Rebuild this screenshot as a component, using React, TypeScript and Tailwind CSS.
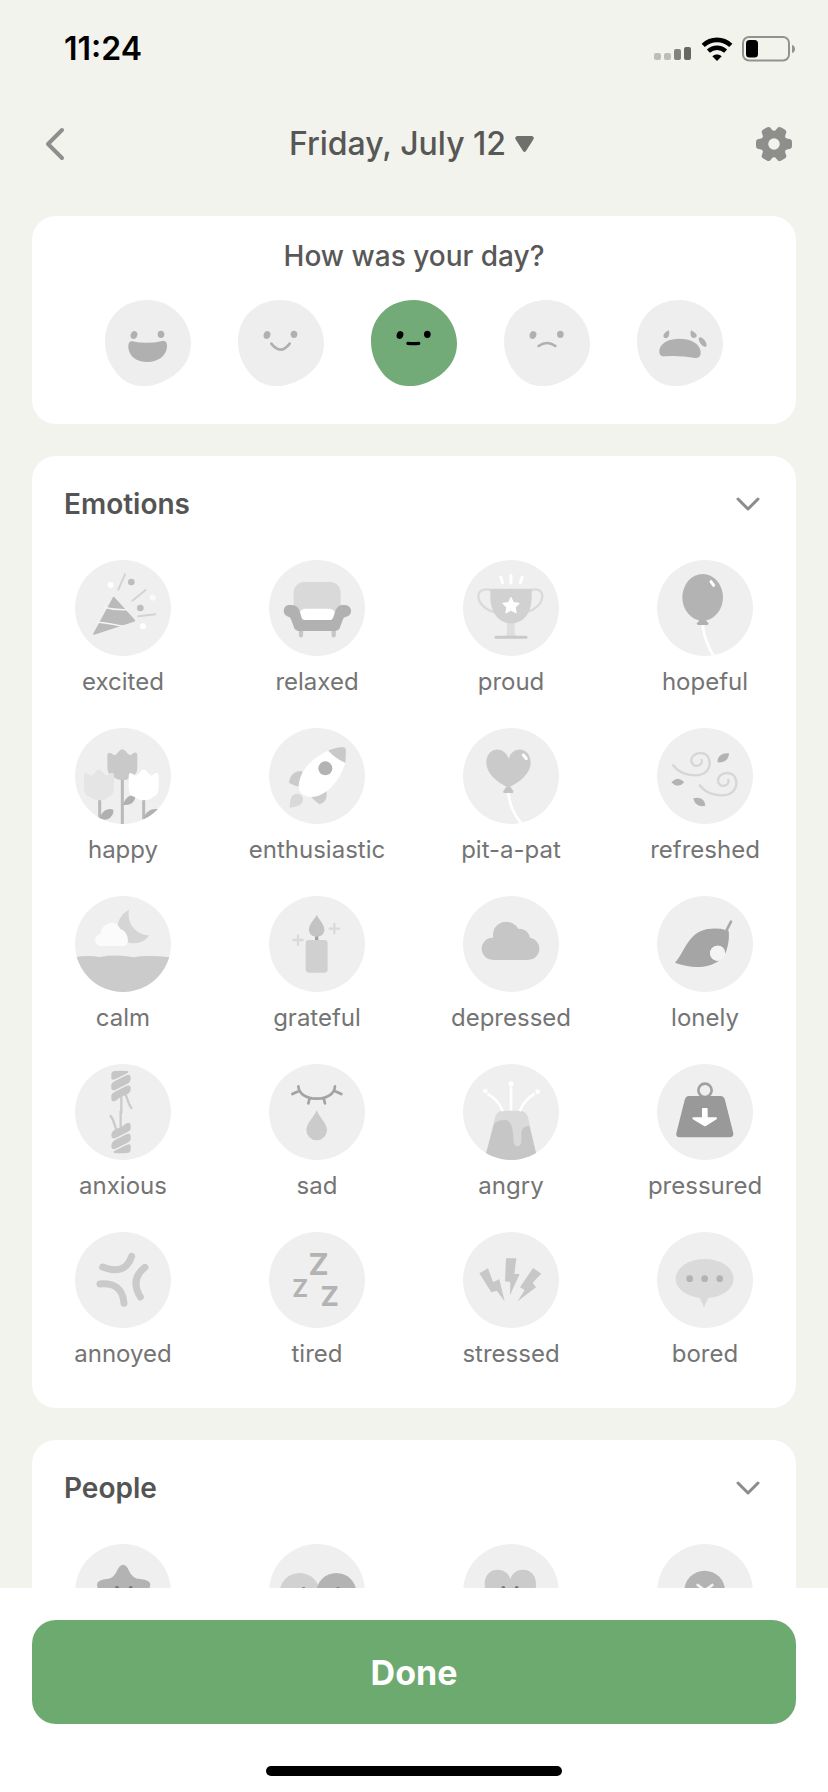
import React, { useState } from 'react';

const BG = '#efefef';

interface IconItem {
  name: string;
  icon: React.ReactNode;
}

const SignalIcon = () => (
  <svg width="38" height="14" viewBox="0 0 38 14" aria-hidden="true">
    <rect x="0" y="7" width="7" height="7" rx="2" fill="#bdbeb9" />
    <rect x="10" y="7" width="7" height="7" rx="2" fill="#bdbeb9" />
    <rect x="20" y="3" width="7" height="11" rx="2" fill="#82837f" />
    <rect x="30" y="1" width="7" height="13" rx="2" fill="#666762" />
  </svg>
);

const WifiIcon = () => (
  <svg width="32" height="24" viewBox="0 0 32 24" aria-hidden="true">
    <path d="M2.2 8.4C10 1 22 1 29.8 8.4" fill="none" stroke="#000" strokeWidth="4.6" />
    <path d="M7.4 14.2C12.4 9.6 19.6 9.6 24.6 14.2" fill="none" stroke="#000" strokeWidth="4.4" />
    <path d="M16 24L11.3 19.2C14 16.8 18 16.8 20.7 19.2Z" fill="#000" />
  </svg>
);

const BatteryIcon = () => (
  <svg width="54" height="26" viewBox="0 0 54 26" aria-hidden="true">
    <rect x="1" y="1" width="46" height="23.500" rx="6" fill="none" stroke="#92938f" strokeWidth="2" />
    <rect x="4" y="4" width="12" height="17.500" rx="3.500" fill="#000" />
    <path d="M50 9C54 10 54 16 50 17Z" fill="#92938f" />
  </svg>
);

const GearIcon = () => (
  <svg width="36" height="36" viewBox="-18 -18 36 36" aria-hidden="true">
    <circle r="9.500" fill="none" stroke="#8e8e8c" strokeWidth="7.500" />
    {[0, 60, 120, 180, 240, 300].map((angle) => (
      <path
        key={angle}
        d="M10 -6.500L13 -5.500L16.500 -4.800Q18 -4 18 -2V2Q18 4 16.500 4.800L13 5.500L10 6.500Z"
        fill="#8e8e8c"
        transform={`rotate(${angle})`}
      />
    ))}
  </svg>
);

const ChevronDown = () => (
  <svg width="24" height="14" viewBox="0 0 24 14" fill="none" stroke="#8c8c8c" strokeWidth="3" strokeLinecap="round" strokeLinejoin="round" aria-hidden="true">
    <path d="M2 2L12 12L22 2" />
  </svg>
);

const moods = [
  {
    name: 'great',
    face: (
      <>
        <ellipse cx="87" cy="105" rx="10" ry="12" transform="rotate(18 87 105)" fill="currentColor" />
        <ellipse cx="168" cy="103" rx="10" ry="11" fill="currentColor" />
        <path d="M82 124Q128 134 175 122Q187 122 186 140C184 170 155 186 128 186C95 186 70 168 70 140Q70 122 82 124Z" fill="currentColor" />
      </>
    ),
  },
  {
    name: 'good',
    face: (
      <>
        <ellipse cx="87" cy="105" rx="10" ry="12" transform="rotate(18 87 105)" fill="currentColor" />
        <ellipse cx="168" cy="103" rx="10" ry="11" fill="currentColor" />
        <path d="M100 131Q128 167 155 131" fill="none" stroke="currentColor" strokeWidth="8" strokeLinecap="round" />
      </>
    ),
  },
  {
    name: 'okay',
    face: (
      <>
        <ellipse cx="87" cy="105" rx="10" ry="12" transform="rotate(18 87 105)" fill="currentColor" />
        <ellipse cx="169" cy="103" rx="10" ry="11" fill="currentColor" />
        <path d="M111 130Q127 132 143 130" fill="none" stroke="currentColor" strokeWidth="10" strokeLinecap="round" />
      </>
    ),
  },
  {
    name: 'bad',
    face: (
      <>
        <ellipse cx="87" cy="105" rx="10" ry="12" transform="rotate(18 87 105)" fill="currentColor" />
        <ellipse cx="169" cy="103" rx="10" ry="11" fill="currentColor" />
        <path d="M104 138Q129 120 154 138" fill="none" stroke="currentColor" strokeWidth="8" strokeLinecap="round" />
      </>
    ),
  },
  {
    name: 'awful',
    face: (
      <>
        <path d="M96 91C98 104 96 115 86 115C77 114 74 101 96 91Z" fill="currentColor" />
        <path d="M162 91C182 100 184 113 171 114C160 113 159 103 162 91Z" fill="currentColor" />
        <ellipse cx="197" cy="126" rx="8" ry="17" transform="rotate(-36 197 126)" fill="currentColor" />
        <path d="M84 169Q65 171 67 150C74 104 186 104 191 155Q192 175 174 174Q128 166 84 169Z" fill="currentColor" />
      </>
    ),
  },
];

const Tulip = ({ x = 0, y = 0, fill }: { x?: number; y?: number; fill: string }) => (
  <path
    transform={`translate(${x} ${y})`}
    d="M97 82Q98 70 108 76L118 82Q127 78 132 70Q142 57 152 70Q157 78 166 82L176 75Q187 70 187 82V118Q187 140 170 146Q160 156 142 156Q126 156 116 147Q97 140 97 118Z"
    fill={fill}
  />
);

const RopeEnd = () => (
  <>
    <g fill="none" stroke="#cbcbcb" strokeWidth="7" strokeLinecap="round">
      <path d="M139 95V146" />
      <path d="M152 92C160 110 158 118 169 132" />
    </g>
    <g fill="#c6c6c6">
      <path d="M109 30Q110 22 120 21Q140 19 158 21Q163 23 158 27L122 45Q109 50 109 42Z" />
      <path d="M109 62Q110 56 120 51L154 34Q167 29 167 42Q167 54 156 60L122 77Q109 82 109 72Z" />
      <path d="M109 94Q110 88 120 83L154 66Q167 61 167 74Q168 86 152 93L138 98L122 110Q109 116 109 104Z" />
    </g>
  </>
);

const emotions: IconItem[] = [
  {
    name: 'excited',
    icon: (
      <>
        <path d="M116 113L178 182L57 222Z" fill="#bababa" stroke="#bababa" strokeWidth="5" strokeLinejoin="round" />
        <path d="M84 141Q118 151 158 149M66 186Q104 190 146 199" fill="none" stroke="#f5f5f5" strokeWidth="4" />
        <path d="M150 43L130 89M212 90L172 122M241 163L190 169" fill="none" stroke="#d3d3d3" strokeWidth="6" strokeLinecap="round" />
        <circle cx="169" cy="66" r="10" fill="#bdbdbd" />
        <circle cx="196" cy="144" r="10" fill="#bdbdbd" />
        <circle cx="107" cy="75" r="9" fill="#fff" />
        <circle cx="233" cy="113" r="9" fill="#fafafa" />
        <circle cx="204" cy="199" r="9" fill="#fff" />
      </>
    ),
  },
  {
    name: 'relaxed',
    icon: (
      <>
        <path d="M96 210V226M194 210V226" stroke="#c6c6c6" strokeWidth="13" strokeLinecap="round" />
        <rect x="74" y="66" width="141" height="110" rx="32" fill="#d9d9d9" />
        <rect x="92" y="146" width="106" height="40" rx="16" fill="#fff" />
        <path d="M58 135H68C84 135 91 146 94 160L98 174Q100 180 107 180H183Q190 180 192 174L197 160C200 146 208 135 220 135H228A18 18 0 0 1 229 171Q224 172 222 178L212 205Q208 213 200 213H88Q80 213 76 205L66 178Q64 171 58 170A18 18 0 0 1 58 135Z" fill="#b1b1b1" />
      </>
    ),
  },
  {
    name: 'proud',
    icon: (
      <>
        <path d="M113 51L119 68M144 46V69M178 51L172 68" stroke="#fff" strokeWidth="9" strokeLinecap="round" />
        <path d="M84 91C66 84 46 90 46 110C48 134 72 152 98 158M204 91C220 84 238 90 238 110C236 134 212 152 188 158" fill="none" stroke="#dadada" strokeWidth="7" />
        <path d="M132 186H155V222Q158 229 166 230H120Q130 229 132 222Z" fill="#dedede" />
        <path d="M82 86H206V116C204 150 190 188 144 190C100 188 84 150 82 116Z" fill="#d1d1d1" />
        <path d="M99 232H189" stroke="#cacaca" strokeWidth="9" strokeLinecap="round" />
        <path d="M144 113L151 128L168 130L156 142L159 158L144 150L129 158L132 142L120 130L137 128Z" fill="#fff" stroke="#fff" strokeWidth="4" strokeLinejoin="round" />
      </>
    ),
  },
  {
    name: 'hopeful',
    icon: (
      <>
        <path d="M137 194C140 230 154 262 171 290" fill="none" stroke="#fff" strokeWidth="8" />
        <path d="M137 168L154 190Q155 195 150 195H124Q119 195 120 190Z" fill="#b0b0b0" />
        <ellipse cx="137" cy="112" rx="61" ry="70" fill="#b3b3b3" />
        <path d="M162 65L170 76" stroke="#fff" strokeWidth="9" strokeLinecap="round" />
      </>
    ),
  },
  {
    name: 'happy',
    icon: (
      <>
        <path d="M142 150V290M74 205V274M206 205V274" stroke="#b9b9b9" strokeWidth="9" />
        <path d="M145 230C150 210 162 200 180 203C184 220 165 234 145 230ZM74 274C78 250 98 238 115 245C118 262 100 280 80 274ZM206 272C212 250 230 240 250 244C240 262 220 270 206 272Z" fill="#b0b0b0" />
        <Tulip fill="#c9c9c9" />
        <Tulip x={-70} y={61} fill="#e5e5e5" />
        <Tulip x={64} y={61} fill="#fff" />
      </>
    ),
  },
  {
    name: 'enthusiastic',
    icon: (
      <>
        <path d="M60 164Q64 130 98 129L110 150L88 176Q74 172 60 164Z" fill="#cbcbcb" />
        <path d="M126 206L172 188Q178 220 152 229Q138 220 126 206Z" fill="#cbcbcb" />
        <path d="M62 239C62 208 70 196 88 197C106 204 106 222 92 232Q80 238 62 239Z" fill="#d9d9d9" />
        <path d="M178 68C128 88 88 134 89 178Q92 206 126 207C174 206 216 152 229 104Z" fill="#fff" />
        <path d="M178 68Q204 55 224 58Q230 59 231 66L229 104Q200 92 178 68Z" fill="#c9c9c9" />
        <circle cx="169" cy="121" r="21" fill="#b3b3b3" />
      </>
    ),
  },
  {
    name: 'pit-a-pat',
    icon: (
      <>
        <path d="M136 192C138 232 154 262 178 290" fill="none" stroke="#fff" strokeWidth="8" />
        <path d="M136 168L151 189Q152 195 148 195H124Q119 195 121 189Z" fill="#c4c4c4" />
        <path d="M137 92C122 50 70 58 70 104C70 138 104 162 128 175Q136 180 144 175C168 162 203 138 203 104C203 58 150 50 137 92Z" fill="#cacaca" />
        <path d="M181 81L190 92" stroke="#fff" strokeWidth="9" strokeLinecap="round" />
      </>
    ),
  },
  {
    name: 'refreshed',
    icon: (
      <>
        <g fill="none" stroke="#d6d6d6" strokeWidth="7" strokeLinecap="round">
          <path d="M48 112C66 135 90 142 114 142C142 142 158 126 158 106C158 86 146 75 130 75C114 75 102 86 103 98C104 110 114 115 122 113C132 112 136 104 134 96" />
          <path d="M128 172C146 195 170 202 194 202C222 202 238 186 238 166C238 146 226 135 210 135C194 135 182 146 183 158C184 170 194 175 202 173C212 172 216 164 214 156" />
        </g>
        <path d="M182 103C180 85 195 74 216 76C216 95 200 106 182 103ZM43 163Q62 142 82 163Q62 184 43 163ZM109 211C128 205 144 214 145 233C128 238 112 230 109 211Z" fill="#b3b3b3" />
      </>
    ),
  },
  {
    name: 'calm',
    icon: (
      <>
        <path d="M162 42C130 56 118 100 136 124C152 148 202 150 223 118C186 118 154 84 162 42Z" fill="#d5d5d5" />
        <path d="M80 150C56 150 54 120 76 113C84 74 126 72 136 99C160 104 168 150 146 150Z" fill="#fbfbfb" />
        <path d="M0 184Q36 176 74 183Q110 176 150 180L176 184Q210 176 288 184V288H0Z" fill="#cbcbcb" />
      </>
    ),
  },
  {
    name: 'grateful',
    icon: (
      <>
        <rect x="110" y="132" width="66" height="98" rx="10" fill="#d0d0d0" />
        <path d="M143 116V132" stroke="#a3a3a3" strokeWidth="10" />
        <path d="M143 57C150 72 166 84 166 101C166 115 155 122 143 122C131 122 120 115 120 101C120 84 136 72 143 57Z" fill="#c3c3c3" />
        <path d="M87 118V146M73 132H101M196 84V112M182 98H210" stroke="#dadada" strokeWidth="7" strokeLinecap="round" />
      </>
    ),
  },
  {
    name: 'depressed',
    icon: (
      <g fill="#c6c6c6">
        <circle cx="89" cy="158" r="33" />
        <circle cx="196" cy="158" r="33" />
        <circle cx="130" cy="117" r="40" />
        <circle cx="169" cy="130" r="32" />
        <rect x="89" y="124" width="107" height="68" />
      </g>
    ),
  },
  {
    name: 'lonely',
    icon: (
      <>
        <path d="M54 200C84 168 94 100 164 98Q190 97 206 102L215 104C218 130 212 155 205 173A23 23 0 1 0 186 194C150 220 96 216 54 200Z" fill="#a5a5a5" />
        <circle cx="181" cy="172" r="22" fill="#f4f4f4" />
        <path d="M209 102L222 77" stroke="#a8a8a8" strokeWidth="8" strokeLinecap="round" />
      </>
    ),
  },
  {
    name: 'anxious',
    icon: (
      <>
        <RopeEnd />
        <g transform="rotate(180 138 144)">
          <RopeEnd />
        </g>
      </>
    ),
  },
  {
    name: 'sad',
    icon: (
      <>
        <path d="M88 67C90 90 112 104 143 104C174 104 196 90 198 67M70 90L90 81M217 90L197 81M122 102L118 118M164 102L168 118" fill="none" stroke="#a3a3a3" strokeWidth="8" strokeLinecap="round" />
        <path d="M143 139C151 160 174 178 174 198A31 31 0 0 1 112 198C112 178 135 160 143 139Z" fill="#cbcbcb" />
      </>
    ),
  },
  {
    name: 'angry',
    icon: (
      <>
        <path d="M118 140H172Q192 142 196 164L224 288H64L95 164Q100 142 118 140Z" fill="#dadada" />
        <path d="M94 178Q110 166 130 168Q146 172 150 206L152 234Q154 247 163 247Q174 247 175 232V204Q178 186 199 186L224 288H64Z" fill="#c6c6c6" />
        <path d="M118 138Q104 106 76 91M144 136V72M172 138Q186 106 212 91" fill="none" stroke="#fff" strokeWidth="8" strokeLinecap="round" />
        <circle cx="67" cy="81" r="7" fill="#fff" />
        <circle cx="144" cy="60" r="8" fill="#fff" />
        <circle cx="224" cy="83" r="7" fill="#fff" />
      </>
    ),
  },
  {
    name: 'pressured',
    icon: (
      <>
        <circle cx="144" cy="79" r="20" fill="none" stroke="#a0a0a0" strokeWidth="8" />
        <path d="M96 96H190Q201 96 204 108L229 208Q230 220 218 220H68Q56 220 58 208L83 108Q86 96 96 96Z" fill="#999" />
        <path d="M138 135H149V163H177L144 184L109 163H138Z" fill="#fff" stroke="#fff" strokeWidth="6" strokeLinejoin="round" />
      </>
    ),
  },
  {
    name: 'annoyed',
    icon: (
      <path d="M83 105Q150 132 170 73M210 106Q164 142 196 195M75 156Q142 150 147 214" fill="none" stroke="#cacaca" strokeWidth="21" strokeLinecap="round" />
    ),
  },
  {
    name: 'tired',
    icon: (
      <g fill="#b3b3b3" className="font-bold" textAnchor="middle">
        <text x="149" y="129" fontSize="91">Z</text>
        <text x="94" y="196" fontSize="72">Z</text>
        <text x="182" y="223" fontSize="83">Z</text>
      </g>
    ),
  },
  {
    name: 'stressed',
    icon: (
      <path d="M129 79H160L154 126H170L141 190L142 150L126 148ZM49 124L75 109L90 150L109 142L125 208L101 176L85 181ZM210 108L235 125L209 152L219 166L164 208L185 174L171 166Z" fill="#c7c7c7" />
    ),
  },
  {
    name: 'bored',
    icon: (
      <>
        <ellipse cx="143" cy="140" rx="87" ry="59" fill="#dadada" />
        <path d="M124 188H158L141 226Z" fill="#dadada" />
        <g fill="#b3b3b3">
          <circle cx="98" cy="140" r="10" />
          <circle cx="143" cy="140" r="10" />
          <circle cx="188" cy="140" r="10" />
        </g>
      </>
    ),
  },
];

const people: IconItem[] = [
  {
    name: 'friends',
    icon: (
      <>
        <path d="M144 62Q155 62 162 80Q172 104 196 105Q226 108 226 122Q226 134 206 152Q192 166 200 190Q204 222 180 212Q144 190 110 212Q84 222 90 190Q98 166 82 152Q66 134 66 122Q66 108 94 105Q116 104 126 80Q134 62 144 62Z" fill="#b3b3b3" />
        <circle cx="126" cy="132" r="6" fill="#777" />
        <circle cx="167" cy="132" r="6" fill="#777" />
      </>
    ),
  },
  {
    name: 'family',
    icon: (
      <>
        <circle cx="92" cy="147" r="60" fill="#d1d1d1" />
        <circle cx="202" cy="147" r="60" fill="#b3b3b3" />
        <circle cx="104" cy="134" r="5" fill="#777" />
        <circle cx="207" cy="134" r="5" fill="#777" />
      </>
    ),
  },
  {
    name: 'partner',
    icon: (
      <>
        <path d="M142 106C132 66 65 66 65 120C65 170 112 200 142 220C172 200 219 170 219 120C219 66 152 66 142 106Z" fill="#cbcbcb" />
        <circle cx="121" cy="132" r="6" fill="#777" />
        <circle cx="161" cy="132" r="6" fill="#777" />
      </>
    ),
  },
  {
    name: 'none',
    icon: (
      <>
        <circle cx="143" cy="141" r="61" fill="#b3b3b3" />
        <path d="M122 123L137 134L122 146M166 123L151 134L166 146" fill="none" stroke="#f4f4f4" strokeWidth="8" strokeLinecap="round" />
      </>
    ),
  },
];

const IconBadge = ({ children }: { children: React.ReactNode }) => (
  <span className="block size-24 overflow-hidden rounded-full">
    <svg viewBox="0 0 288 288" className="size-full" aria-hidden="true">
      <rect width="288" height="288" fill={BG} />
      {children}
    </svg>
  </span>
);

const Section = ({ title, items, showLabels = true }: { title: string; items: IconItem[]; showLabels?: boolean }) => (
  <section className="shrink-0 rounded-3xl bg-white pt-8 pb-[38px]">
    <button type="button" className="flex w-full items-center justify-between pr-9 pl-8">
      <h2 className="text-[28px] leading-8 font-semibold text-[#545454]">{title}</h2>
      <ChevronDown />
    </button>
    <div className="mt-10 grid grid-cols-4 gap-x-13 gap-y-[30px] px-5">
      {items.map((item) => (
        <button key={item.name} type="button" aria-label={item.name} className="flex flex-col items-center gap-[10px]">
          <IconBadge>{item.icon}</IconBadge>
          {showLabels && <span className="text-2xl text-[#747474]">{item.name}</span>}
        </button>
      ))}
    </div>
  </section>
);

export default function App() {
  const [mood, setMood] = useState('okay');

  return (
    <div className="flex h-screen flex-col bg-[#f2f3ed] font-['Inter',sans-serif]">
      {/* Status bar */}
      <div className="flex h-[98px] shrink-0 items-center justify-between pr-8 pl-16">
        <span className="text-[32px] leading-9 font-semibold text-black">11:24</span>
        <div className="flex items-center gap-[9px]">
          <div className="pt-2">
            <SignalIcon />
          </div>
          <WifiIcon />
          <BatteryIcon />
        </div>
      </div>

      {/* Header */}
      <header className="flex h-[92px] shrink-0 items-center justify-between pr-9 pl-11">
        <button type="button" aria-label="Back" className="flex w-6">
          <svg width="22" height="34" viewBox="0 0 22 34" fill="none" stroke="#8e8e8c" strokeWidth="4" strokeLinecap="round" strokeLinejoin="round" aria-hidden="true">
            <path d="M18 3L4 17L18 31" />
          </svg>
        </button>
        <button type="button" className="flex items-center gap-2 text-[32px] leading-9 font-medium text-[#575755]">
          Friday, July 12
          <svg width="21" height="18" viewBox="0 0 21 18" aria-hidden="true">
            <path d="M3 1H18Q21 2 19 5L12 16Q10.500 18 9 16L2 5Q0 2 3 1Z" fill="#6f6f6d" />
          </svg>
        </button>
        <button type="button" aria-label="Settings">
          <GearIcon />
        </button>
      </header>

      {/* Entry cards */}
      <main className="flex min-h-0 flex-1 flex-col gap-8 overflow-hidden px-8 pt-[26px]">
        <section className="shrink-0 rounded-3xl bg-white pt-6 pb-[38px] text-center">
          <h2 className="text-[28px] leading-8 font-medium text-[#585858]">How was your day?</h2>
          <div className="mt-7 flex justify-center gap-[47px]">
            {moods.map(({ name, face }) => (
              <button
                key={name}
                type="button"
                aria-label={name}
                aria-pressed={mood === name}
                onClick={() => setMood(name)}
                className={mood === name ? 'text-black' : 'text-[#b0b0b0]'}
              >
                <svg width="86" height="86" viewBox="0 0 258 258" aria-hidden="true">
                  <path
                    d="M128 0C200 0 258 62 258 130C258 188 218 226 174 245C152 255 134 258 112 258C78 258 46 240 24 204C8 180 0 152 0 124C0 50 56 0 128 0Z"
                    fill={mood === name ? '#73ab78' : '#eeeeee'}
                  />
                  {face}
                </svg>
              </button>
            ))}
          </div>
        </section>

        <Section title="Emotions" items={emotions} />
        <Section title="People" items={people} showLabels={false} />
      </main>

      {/* Bottom action */}
      <footer className="shrink-0 bg-white px-8 pt-8 pb-4">
        <button type="button" className="h-[104px] w-full rounded-3xl bg-[#6daa6f] text-[34px] font-bold text-white">
          Done
        </button>
        <div className="mx-auto mt-[42px] h-[10px] w-[296px] rounded-full bg-black" />
      </footer>
    </div>
  );
}
